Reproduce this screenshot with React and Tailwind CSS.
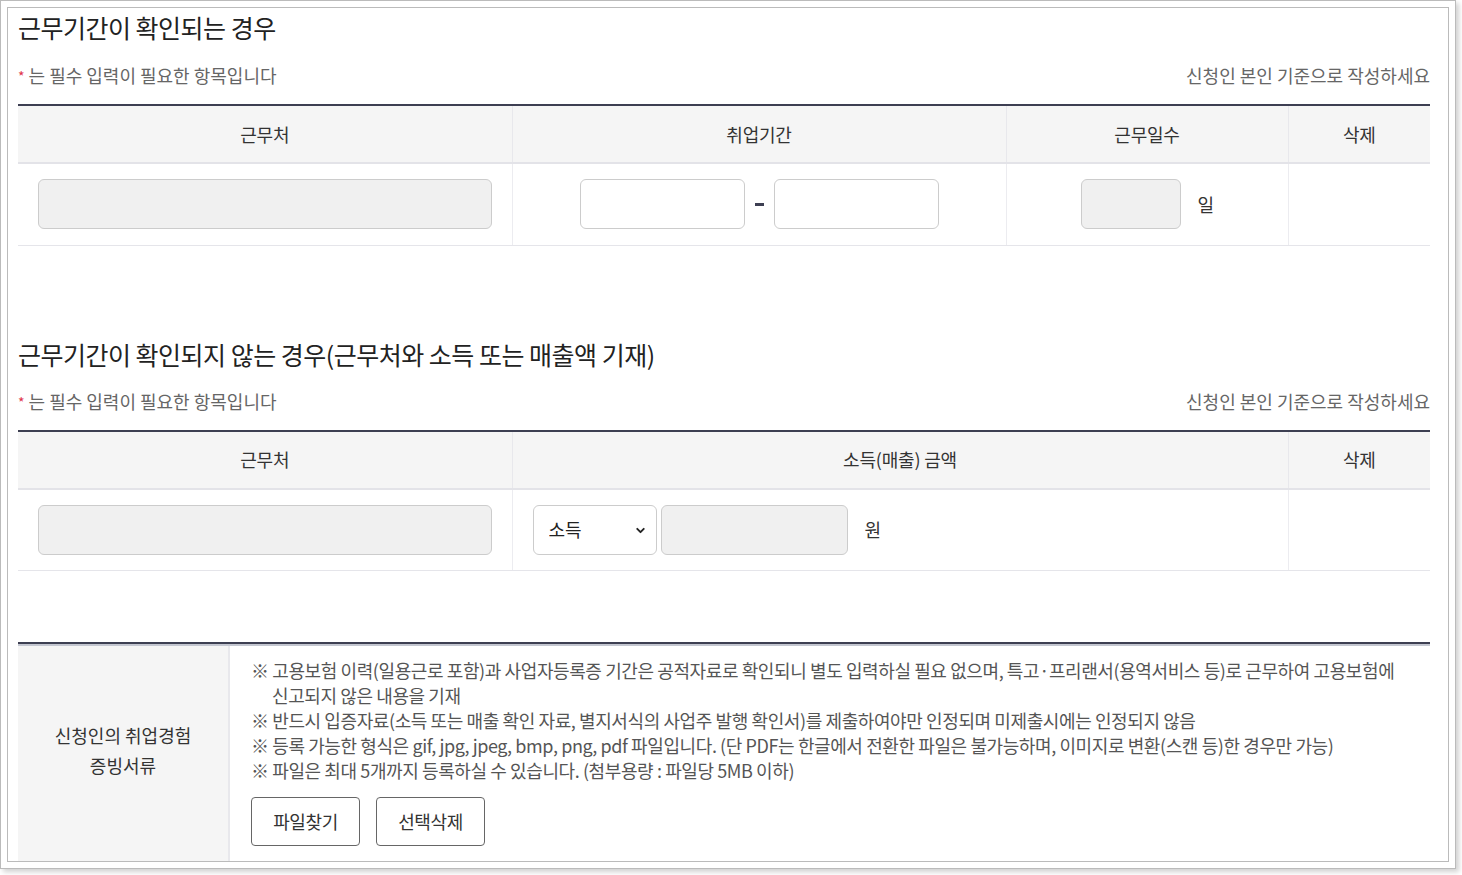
import { ChevronDown } from 'lucide-react';

const font = { fontFamily: '"Noto Sans CJK KR", "Noto Sans", sans-serif' };

const Notice = () => (
  <div className="flex items-center justify-between mt-[19px] h-[24px] text-[18px] text-[#666] tracking-[0px]">
    <p>
      <span className="text-[#e0334a] text-[14px] mr-[4px] align-[1px]">*</span>는 필수 입력이 필요한 항목입니다
    </p>
    <p>신청인 본인 기준으로 작성하세요</p>
  </div>
);

const Th = ({ children, last }) => (
  <th
    className={
      'h-[58px] bg-[#f5f5f5] font-normal text-[18px] text-[#333] tracking-[-0.2px] border-b-2 border-[#e3e3e8] ' +
      (last ? '' : 'border-r border-r-[#e8e8ec]')
    }
  >
    {children}
  </th>
);

const Td = ({ children, last, className = '' }) => (
  <td
    className={
      'h-[82px] border-b border-[#e5e5ea] ' + (last ? '' : 'border-r border-r-[#ececf0] ') + className
    }
  >
    {children}
  </td>
);

const App = () => {
  return (
    <div className="bg-white w-[1462px] h-[875px]" style={font}>
      <div className="w-[1456px] h-[869px] border border-[#bbbbbb] p-[6px] shadow-[3px_3px_5px_rgba(0,0,0,0.18)]">
        <div className="h-full border border-[#bbbbbb] pl-[10px] pr-[18px] overflow-hidden">
          {/* section 1 */}
          <h2 className="mt-[2px] text-[25px] leading-[34px] text-[#222] tracking-[-0.5px]">근무기간이 확인되는 경우</h2>
          <Notice />
          <table className="w-full mt-[17px] border-t-2 border-[#3d3f52] border-collapse table-fixed">
            <colgroup>
              <col className="w-[494px]" />
              <col className="w-[494px]" />
              <col className="w-[282px]" />
              <col />
            </colgroup>
            <thead>
              <tr>
                <Th>근무처</Th>
                <Th>취업기간</Th>
                <Th>근무일수</Th>
                <Th last>삭제</Th>
              </tr>
            </thead>
            <tbody>
              <tr>
                <Td className="px-[20px]">
                  <input
                    readOnly
                    className="w-full h-[50px] bg-[#f0f0f0] border border-[#cccccc] rounded-[6px] outline-none"
                  />
                </Td>
                <Td>
                  <div className="flex items-center justify-center gap-[10px]">
                    <input className="w-[165px] h-[50px] bg-white border border-[#cccccc] rounded-[6px] outline-none" />
                    <span className="w-[9px] h-[3px] bg-[#3d3f52]" aria-label="-" />
                    <input className="w-[165px] h-[50px] bg-white border border-[#cccccc] rounded-[6px] outline-none" />
                  </div>
                </Td>
                <Td>
                  <div className="flex items-center pl-[74px] gap-[17px]">
                    <input
                      readOnly
                      className="w-[100px] h-[50px] bg-[#f0f0f0] border border-[#cccccc] rounded-[6px] outline-none"
                    />
                    <span className="text-[18px] text-[#333]">일</span>
                  </div>
                </Td>
                <Td last />
              </tr>
            </tbody>
          </table>

          {/* section 2 */}
          <h2 className="mt-[91px] text-[25px] leading-[34px] text-[#222] tracking-[-0.5px]">
            근무기간이 확인되지 않는 경우(근무처와 소득 또는 매출액 기재)
          </h2>
          <Notice />
          <table className="w-full mt-[16px] border-t-2 border-[#3d3f52] border-collapse table-fixed">
            <colgroup>
              <col className="w-[494px]" />
              <col className="w-[776px]" />
              <col />
            </colgroup>
            <thead>
              <tr>
                <Th>근무처</Th>
                <Th>소득(매출) 금액</Th>
                <Th last>삭제</Th>
              </tr>
            </thead>
            <tbody>
              <tr>
                <Td className="px-[20px]">
                  <input
                    readOnly
                    className="w-full h-[50px] bg-[#f0f0f0] border border-[#cccccc] rounded-[6px] outline-none"
                  />
                </Td>
                <Td>
                  <div className="flex items-center pl-[20px]">
                    <div className="relative">
                      <select className="appearance-none w-[124px] h-[50px] bg-white border border-[#cccccc] rounded-[6px] pl-[15px] text-[18px] text-[#222] outline-none">
                        <option>소득</option>
                        <option>매출</option>
                      </select>
                      <ChevronDown
                        size={13}
                        strokeWidth={3.5}
                        className="absolute right-[10px] top-[19px] text-[#222] pointer-events-none"
                      />
                    </div>
                    <input
                      readOnly
                      className="ml-[4px] w-[187px] h-[50px] bg-[#f0f0f0] border border-[#cccccc] rounded-[6px] outline-none"
                    />
                    <span className="ml-[17px] text-[18px] text-[#333]">원</span>
                  </div>
                </Td>
                <Td last />
              </tr>
            </tbody>
          </table>

          {/* section 3 */}
          <div className="mt-[71px] border-t-2 border-[#3d3f52]">
            <div className="flex border-t-2 border-[#c3c6d0]">
              <div className="w-[212px] shrink-0 bg-[#f5f5f5] border-r-2 border-[#e8e8ec] pb-[8px] flex items-center justify-center text-center text-[18px] leading-[30px] text-[#333]">
                신청인의 취업경험
                <br />
                증빙서류
              </div>
              <div className="flex-1 pl-[21px] pt-[12px] pb-[16px] text-[18px] leading-[25px] text-[#555] tracking-[-0.4px] break-keep">
                <p className="pl-[21px] -indent-[21px]">
                  ※ 고용보험 이력(일용근로 포함)과 사업자등록증 기간은 공적자료로 확인되니 별도 입력하실 필요 없으며,
                  특고·프리랜서(용역서비스 등)로 근무하여 고용보험에 신고되지 않은 내용을 기재
                </p>
                <p>※ 반드시 입증자료(소득 또는 매출 확인 자료, 별지서식의 사업주 발행 확인서)를 제출하여야만 인정되며 미제출시에는 인정되지 않음</p>
                <p>※ 등록 가능한 형식은 gif, jpg, jpeg, bmp, png, pdf 파일입니다. (단 PDF는 한글에서 전환한 파일은 불가능하며, 이미지로 변환(스캔 등)한 경우만 가능)</p>
                <p>※ 파일은 최대 5개까지 등록하실 수 있습니다. (첨부용량 : 파일당 5MB 이하)</p>
                <div className="flex gap-[16px] mt-[14px]">
                  <button className="w-[109px] h-[49px] border border-[#666] rounded-[4px] text-[18px] text-[#333] bg-white">
                    파일찾기
                  </button>
                  <button className="w-[109px] h-[49px] border border-[#666] rounded-[4px] text-[18px] text-[#333] bg-white">
                    선택삭제
                  </button>
                </div>
              </div>
            </div>
          </div>
        </div>
      </div>
    </div>
  );
};

export default App;
